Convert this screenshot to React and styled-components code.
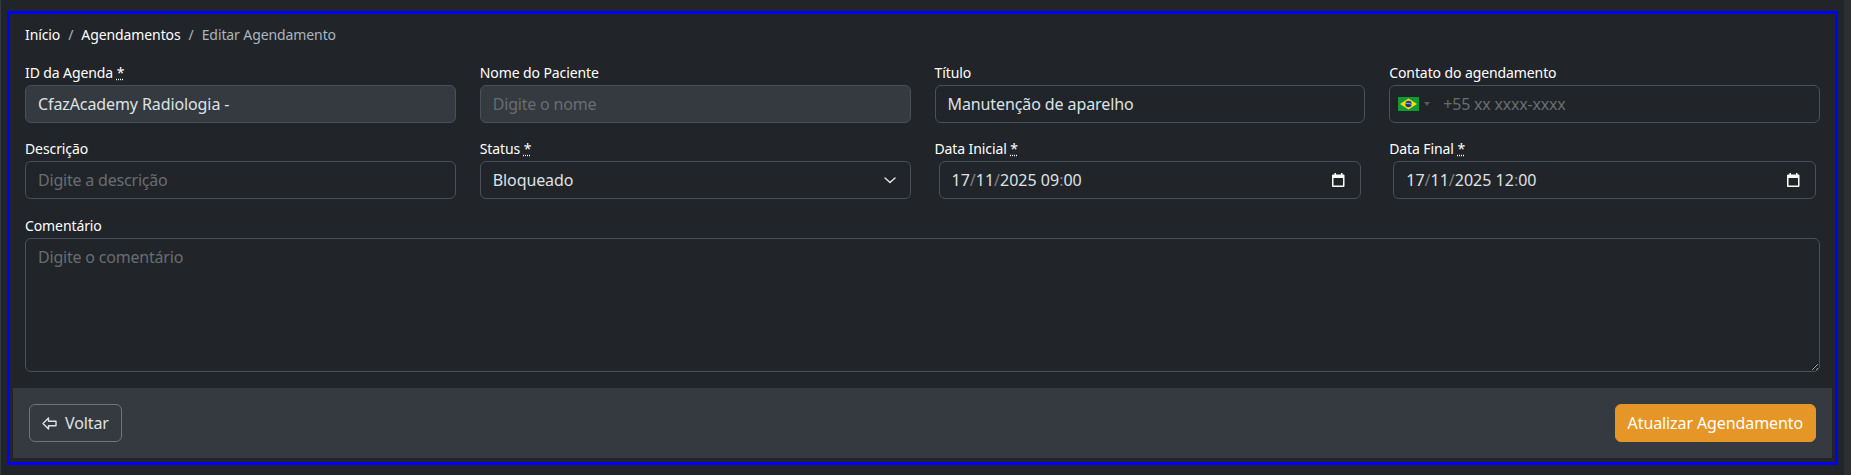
import React from 'react';
import styled, { createGlobalStyle } from 'styled-components';

const GlobalStyle = createGlobalStyle`
  html, body {
    margin: 0;
    padding: 0;
    height: 475px;
    overflow: hidden;
    background: #212529;
    font-family: "Noto Sans", "Open Sans", sans-serif;
    color: #dee2e6;
    color-scheme: dark;
  }
  * { box-sizing: border-box; }
  ::placeholder { color: #686d72; opacity: 1; letter-spacing: -0.2px; }
`;

const Page = styled.div`
  height: 475px;
  padding: 11px 6px 10px 6px;
  background: #212529;
  border-left: 1px solid #343a40;
  border-right: 7px solid #2b2f33;
`;
const Frame = styled.form`
  height: 100%;
  border: 3px solid #0000ff;
  padding: 0 3px 4px 3px;
  display: flex;
  flex-direction: column;
`;
const Body = styled.div`
  flex: 1;
  padding: 10px 12px 0;
`;
const Crumbs = styled.ol`
  display: flex;
  list-style: none;
  margin: 0 0 17px;
  padding: 0;
  font-size: 14px;
  line-height: 21px;
  letter-spacing: -0.1px;
  color: #fff;

  li + li::before {
    content: '/';
    padding: 0 8px;
    color: #adb5bd;
  }
`;
const Crumb = styled.li`
  color: ${(p) => (p.$active ? '#adb5bd' : '#fff')};
`;
const Row = styled.div`
  display: grid;
  grid-template-columns: repeat(4, 1fr);
  column-gap: 24px;
  row-gap: 15px;
  margin-bottom: 16px;
`;
const Field = styled.div`
  min-width: 0;
`;
const Label = styled.label`
  display: block;
  font-size: 14px;
  line-height: 21px;
  letter-spacing: -0.1px;
  margin-bottom: 2px;
  color: #fff;
`;
const Required = styled.abbr`
  text-decoration: underline dotted;
  cursor: help;
`;
const controlStyle = `
  display: block;
  width: 100%;
  height: 38px;
  padding: 6px 12px;
  font-family: inherit;
  font-size: 16px;
  line-height: 24px;
  letter-spacing: -0.1px;
  color: #dee2e6;
  border: 1px solid #495057;
  border-radius: 6px;
  outline: none;
`;
const Input = styled.input`
  ${controlStyle}
  background: ${(p) => (p.disabled ? '#343a40' : '#212529')};
`;
const SelectBox = styled.div`
  ${controlStyle}
  display: flex;
  align-items: center;
  justify-content: space-between;
  background: #212529;
`;
const DateBox = styled.div`
  ${controlStyle}
  display: flex;
  align-items: center;
  justify-content: space-between;
  background: #212529;
  letter-spacing: 0;
  width: calc(100% - 8px);
  margin: 0 4px;
  padding-right: 15px;
`;
const Sep = styled.span`
  color: #7b8085;
`;
const PhoneBox = styled.div`
  ${controlStyle}
  display: flex;
  align-items: center;
  padding: 0 0 0 8px;
  background: #212529;
`;
const PhoneInput = styled.input`
  flex: 1;
  min-width: 0;
  border: 0;
  outline: none;
  background: transparent;
  font: inherit;
  color: inherit;
  padding: 0 12px 0 0;
`;
const FlagPicker = styled.div`
  display: flex;
  align-items: center;
  width: 45px;
  gap: 5px;
`;
const Caret = styled.span`
  width: 0;
  height: 0;
  border-left: 3px solid transparent;
  border-right: 3px solid transparent;
  border-top: 4px solid #555a5f;
`;
const Comment = styled.textarea`
  ${controlStyle}
  height: 134px;
  background: #212529;
  resize: vertical;
`;
const Footer = styled.div`
  display: flex;
  justify-content: space-between;
  align-items: center;
  height: 70px;
  padding: 0 16px;
  background: #343a40;
`;
const BackButton = styled.button`
  display: flex;
  align-items: center;
  gap: 8px;
  height: 38px;
  padding: 0 12px;
  font-family: inherit;
  font-size: 16px;
  letter-spacing: -0.1px;
  color: #dee2e6;
  background: transparent;
  border: 1px solid #6c757d;
  border-radius: 6px;
`;
const SubmitButton = styled.button`
  height: 38px;
  padding: 0 12px;
  font-family: inherit;
  font-size: 16px;
  letter-spacing: -0.1px;
  color: #fff;
  background: #e69626;
  border: 1px solid #e69626;
  border-radius: 6px;
`;

const Star = () => <Required title="obrigatório">*</Required>;

const Chevron = () => (
  <svg width="16" height="16" viewBox="0 0 16 16" fill="none">
    <path d="m3 6 5 4.500 5-4.500" stroke="#dee2e6" strokeWidth="1.500" strokeLinecap="round" strokeLinejoin="round" />
  </svg>
);

const Calendar = () => (
  <svg width="13" height="14" viewBox="0 0 13 14">
    <path fill="#fff" fillRule="evenodd" d="M2.500 0h1.500v1.500h5V0h1.500v1.500h1A1 1 0 0 1 12.500 2.500v10.500a1 1 0 0 1-1 1h-10.500a1 1 0 0 1-1-1V2.500a1 1 0 0 1 1-1h1.500V0ZM1.500 5v7.500h9.500V5H1.500Z" />
  </svg>
);

const BackArrow = () => (
  <svg width="15" height="13" viewBox="0 0 15 13" fill="none">
    <path d="M6.500 1 1 6.500 6.500 12V8.800h7.500V4.200H6.500V1Z" stroke="#dee2e6" strokeWidth="1.400" strokeLinejoin="round" />
  </svg>
);

const BrazilFlag = () => (
  <svg width="21" height="14" viewBox="0 0 21 14">
    <rect width="21" height="14" fill="#0f9b3a" />
    <path d="M10.500 1.500 19 7 10.500 12.500 2 7Z" fill="#fedf00" />
    <circle cx="10.500" cy="7" r="3.200" fill="#1b3a8c" />
    <path d="M7.500 6.500c2-.6 4.200-.2 6 1" stroke="#fff" strokeWidth=".6" fill="none" />
  </svg>
);

const DateField = ({ label, date, time }) => {
  const [d, m, y] = date.split('/');
  const [h, min] = time.split(':');
  return (
    <Field>
      <Label>{label} <Star /></Label>
      <DateBox>
        <span>
          {d}<Sep>/</Sep>{m}<Sep>/</Sep>{y} {h}<Sep>:</Sep>{min}
        </span>
        <Calendar />
      </DateBox>
    </Field>
  );
};

export default function App() {
  return (
    <Page>
      <GlobalStyle />
      <Frame onSubmit={(e) => e.preventDefault()}>
        <Body>
          <Crumbs>
            <Crumb>Início</Crumb>
            <Crumb>Agendamentos</Crumb>
            <Crumb $active>Editar Agendamento</Crumb>
          </Crumbs>
          <Row>
            <Field>
              <Label>ID da Agenda <Star /></Label>
              <Input disabled value="CfazAcademy Radiologia -" readOnly />
            </Field>
            <Field>
              <Label>Nome do Paciente</Label>
              <Input disabled placeholder="Digite o nome" />
            </Field>
            <Field>
              <Label>Título</Label>
              <Input defaultValue="Manutenção de aparelho" />
            </Field>
            <Field>
              <Label>Contato do agendamento</Label>
              <PhoneBox>
                <FlagPicker><BrazilFlag /><Caret /></FlagPicker>
                <PhoneInput placeholder="+55 xx xxxx-xxxx" />
              </PhoneBox>
            </Field>
            <Field>
              <Label>Descrição</Label>
              <Input placeholder="Digite a descrição" />
            </Field>
            <Field>
              <Label>Status <Star /></Label>
              <SelectBox>Bloqueado<Chevron /></SelectBox>
            </Field>
            <DateField label="Data Inicial" date="17/11/2025" time="09:00" />
            <DateField label="Data Final" date="17/11/2025" time="12:00" />
          </Row>
          <Field>
            <Label>Comentário</Label>
            <Comment placeholder="Digite o comentário" />
          </Field>
        </Body>
        <Footer>
          <BackButton type="button"><BackArrow />Voltar</BackButton>
          <SubmitButton type="submit">Atualizar Agendamento</SubmitButton>
        </Footer>
      </Frame>
    </Page>
  );
}
